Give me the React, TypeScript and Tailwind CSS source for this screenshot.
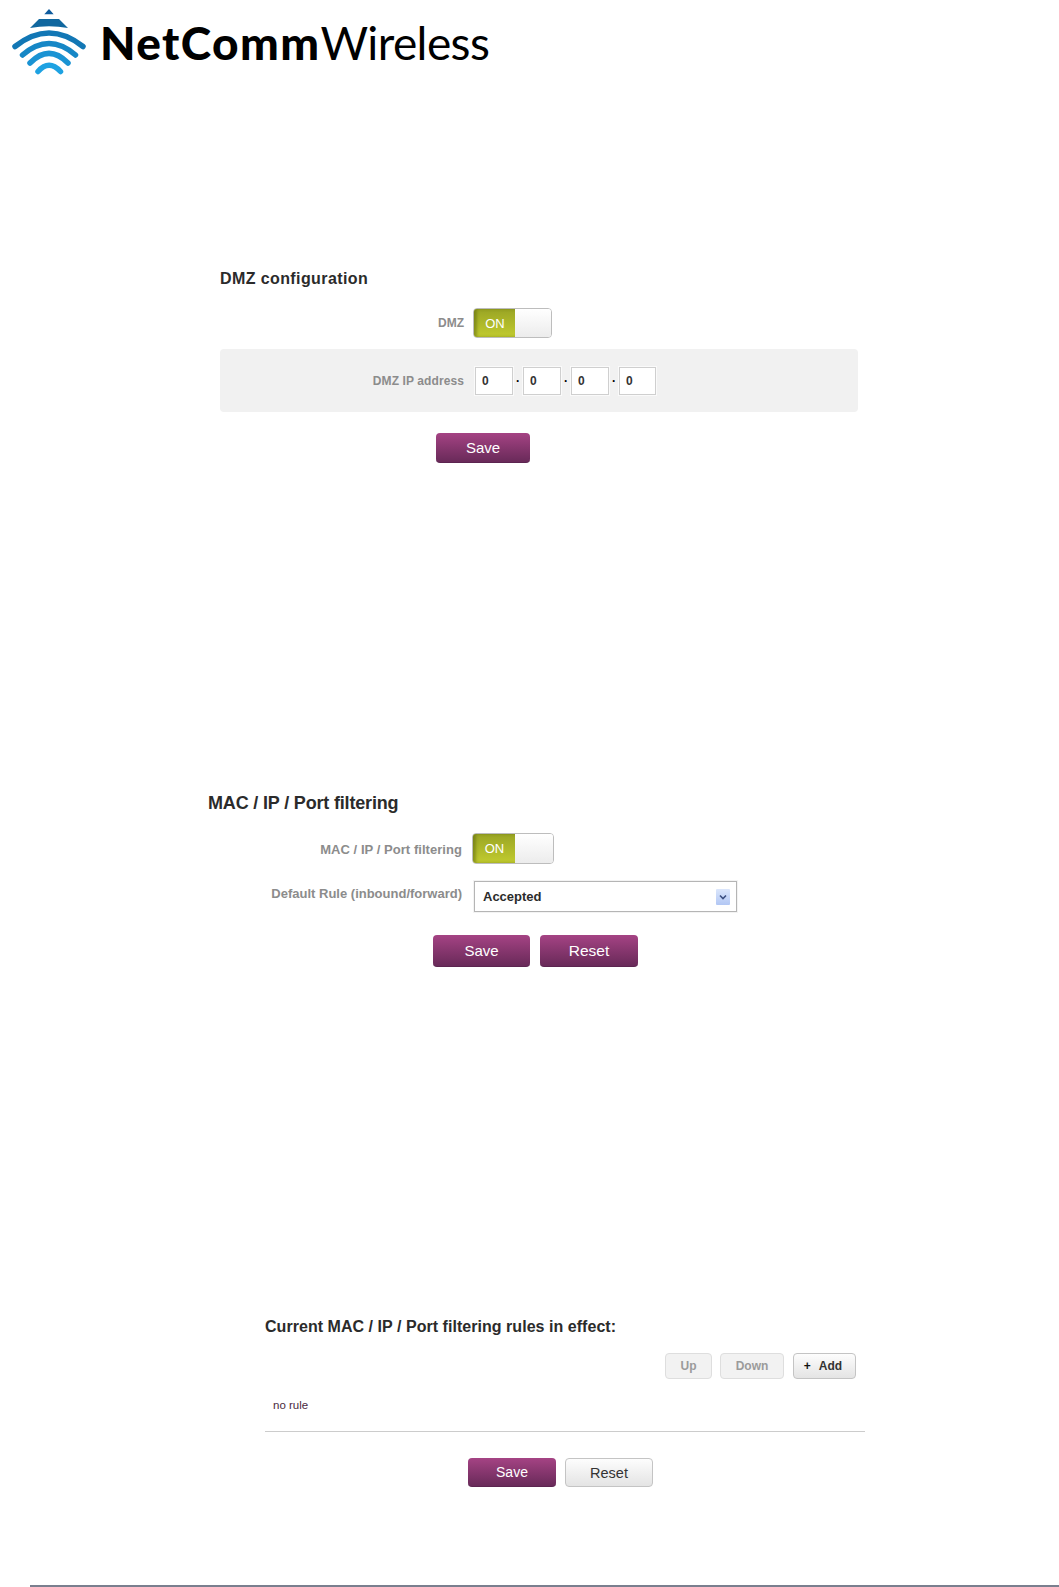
const font = "font-['Liberation_Sans',Arial,sans-serif]";

const Logo = () => {
  return (
    <div className="flex items-start">
      <svg width="90" height="80" viewBox="0 0 90 80" fill="none" className="shrink-0">
        <polygon points="49,9 44.3,14.3 53.7,14.3" fill="#0f5c9e" />
        <path d="M39 19 L59 19 L68 28 Q49 24.5 30 28 Z" fill="#10679f" />
        <path d="M15 46.5 Q49 19.5 83 46.5" stroke="#1277b5" strokeWidth="5.5" strokeLinecap="round" />
        <path d="M22.5 55 Q49 32 75.5 55" stroke="#1687c6" strokeWidth="5.5" strokeLinecap="round" />
        <path d="M30 63 Q49 44 68 63" stroke="#1a93d3" strokeWidth="5.5" strokeLinecap="round" />
        <path d="M38 71.5 Q49 59 60.5 71.5" stroke="#1ea2e2" strokeWidth="5.5" strokeLinecap="round" />
      </svg>
      <div className="ml-[10px] mt-[14px] text-[46px] leading-[58px] text-black font-['Lato',sans-serif] whitespace-nowrap">
        <span className="font-black tracking-[1.4px]">NetComm</span>
        <span className="font-normal tracking-[-0.6px]">Wireless</span>
      </div>
    </div>
  );
};

const Toggle = ({ w, on }: { w: string; on: string }) => {
  return (
    <div className={`flex h-full ${w} rounded-[4px] border border-[#bdbdbd] overflow-hidden`}>
      <div className={`${on} pt-px pl-px flex items-center justify-center bg-gradient-to-b from-[#9aa524] to-[#c1cb2f] shadow-[inset_3px_0_3px_rgba(90,100,10,0.5)] text-white text-[13px]`}>
        ON
      </div>
      <div className="flex-1 bg-gradient-to-b from-white to-[#ececec]"></div>
    </div>
  );
};

const PurpleBtn = ({ label, w, text }: { label: string; w: string; text: string }) => {
  return (
    <div className={`${w} ${text} h-full flex items-center justify-center rounded-[4px] text-white bg-gradient-to-b from-[#a54384] to-[#692a59] border-b border-[#5c2450]`}>
      {label}
    </div>
  );
};

const GreyBtn = ({ children, w, dim, text }: { children: React.ReactNode; w: string; dim?: boolean; text: string }) => {
  return (
    <div
      className={`${w} ${text} h-full flex items-center justify-center rounded-[4px] border ${
        dim
          ? "border-[#dedede] bg-[#f2f2f2] text-[#9b9b9b]"
          : "border-[#c4c4c4] bg-gradient-to-b from-[#fdfdfd] to-[#e4e4e4] text-[#333]"
      }`}
    >
      {children}
    </div>
  );
};

const IpBox = ({ w = "w-[38px]" }: { w?: string }) => {
  return (
    <input
      readOnly
      value="0"
      className={`${w} h-[28px] pl-[6px] bg-white border border-[#cfcfcf] shadow-[0_0_0_1px_#fafafa] text-[12px] font-bold text-[#333] outline-none`}
    />
  );
};

const Dot = () => <span className="w-[10px] text-center text-[12px] font-bold text-black">·</span>;

export default function App() {
  return (
    <div className={`${font} flex flex-col w-[1059px] h-[1587px] bg-white overflow-hidden`}>
      <div className="h-[269px]">
        <Logo />
      </div>

      {/* DMZ */}
      <div className="ml-[220px] w-[638px]">
        <h2 className="text-[16px] leading-[20px] font-bold tracking-[0.4px] text-[#2b2b2b]">DMZ configuration</h2>
        <div className="mt-[19px] h-[30px] flex items-center">
          <label className="w-[244px] text-right text-[12px] font-bold text-[#8c8c8c]">DMZ</label>
          <div className="ml-[9px] h-full">
            <Toggle w="w-[79px]" on="w-[41px]" />
          </div>
        </div>
        <div className="mt-[11px] h-[63px] flex items-center rounded-[4px] bg-[#f1f1f1]">
          <label className="w-[244px] text-right text-[12px] font-bold tracking-[0.1px] text-[#8c8c8c]">DMZ IP address</label>
          <div className="ml-[11px] flex items-center">
            <IpBox />
            <Dot />
            <IpBox />
            <Dot />
            <IpBox />
            <Dot />
            <IpBox w="w-[37px]" />
          </div>
        </div>
        <div className="mt-[21px] h-[30px] pl-[216px] flex">
          <PurpleBtn label="Save" w="w-[94px] pt-px" text="text-[15px]" />
        </div>
      </div>

      {/* MAC filtering */}
      <div className="mt-[329px] ml-[208px] w-[540px]">
        <h2 className="text-[18px] leading-[22px] font-bold tracking-[-0.17px] text-[#2b2b2b]">MAC / IP / Port filtering</h2>
        <div className="mt-[19px] h-[31px] flex items-center">
          <label className="w-[254px] pt-[2px] text-right text-[13px] font-bold tracking-[0.05px] text-[#8c8c8c]">MAC / IP / Port filtering</label>
          <div className="ml-[10px] h-full">
            <Toggle w="w-[82px]" on="w-[42px]" />
          </div>
        </div>
        <div className="mt-[17px] h-[31px] flex items-start">
          <label className="w-[254px] pt-px text-right text-[13px] leading-[24px] font-bold text-[#8c8c8c]">
            Default Rule (inbound/forward)
          </label>
          <div className="ml-[12px] w-[263px] h-full pl-[8px] pr-[6px] flex items-center justify-between bg-white border border-[#b5b5b5] shadow-[0_0_0_1px_#f3f3f3] text-[13px] font-bold text-[#2b2b2b]">
            <span>Accepted</span>
            <div className="w-[14px] h-[16px] flex items-center justify-center rounded-[1px] bg-gradient-to-b from-[#dbe6fb] to-[#b2c7f4]">
              <svg width="8" height="6" viewBox="0 0 8 6" fill="none">
                <path d="M1 1.5 L4 4.5 L7 1.5" stroke="#3c4f80" strokeWidth="1.6" />
              </svg>
            </div>
          </div>
        </div>
        <div className="mt-[23px] h-[32px] pl-[225px] flex gap-[10px]">
          <PurpleBtn label="Save" w="w-[97px] pt-px" text="text-[15px]" />
          <PurpleBtn label="Reset" w="w-[98px]" text="text-[15.5px]" />
        </div>
      </div>

      {/* Rules */}
      <div className="mt-[350px] ml-[265px] w-[600px]">
        <h2 className="text-[16px] leading-[20px] font-bold tracking-[0.04px] text-[#2b2b2b]">Current MAC / IP / Port filtering rules in effect:</h2>
        <div className="mt-[16px] h-[26px] pl-[400px] flex">
          <GreyBtn w="w-[47px]" dim text="text-[12px] font-bold">Up</GreyBtn>
          <div className="ml-[8px] h-full">
            <GreyBtn w="w-[64px]" dim text="text-[12px] font-bold">Down</GreyBtn>
          </div>
          <div className="ml-[9px] h-full">
            <GreyBtn w="w-[63px] pr-[3px]" text="text-[12px] font-bold gap-[8px]">
              <span className="text-[#111]">+</span>
              <span>Add</span>
            </GreyBtn>
          </div>
        </div>
        <p className="mt-[19px] ml-[8px] text-[11.5px] leading-[14px] text-[#4a2a40]">no rule</p>
        <div className="mt-[19px] h-px bg-[#cccccc]"></div>
        <div className="mt-[26px] h-[29px] pl-[203px] flex gap-[9px]">
          <PurpleBtn label="Save" w="w-[88px]" text="text-[14px]" />
          <GreyBtn w="w-[88px]" text="text-[14.5px] pt-[2px]">Reset</GreyBtn>
        </div>
      </div>

      <div className="mt-auto ml-[30px] h-[2px] bg-[#7a7f8e]"></div>
    </div>
  );
}
